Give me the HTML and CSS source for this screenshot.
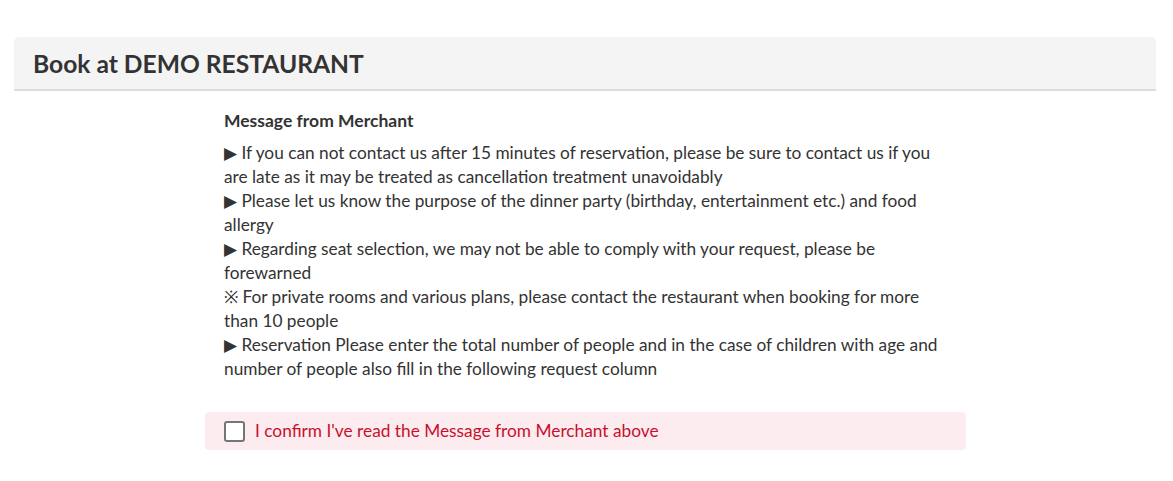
FILE: index.html
```html
<!DOCTYPE html>
<html>
<head>
<meta charset="utf-8">
<link rel="stylesheet" href="styles.css">
</head>
<body>
<div class="page">
  <div class="header"><h1>Book at DEMO RESTAURANT</h1></div>
  <div class="content">
    <div class="message">
      <h2>Message from Merchant</h2>
      <p>▶ If you can not contact us after 15 minutes of reservation, please be sure to contact us if you are late as it may be treated as cancellation treatment unavoidably<br>▶ Please let us know the purpose of the dinner party (birthday, entertainment etc.) and food allergy<br>▶ Regarding seat selection, we may not be able to comply with your request, please be forewarned<br>※ For private rooms and various plans, please contact the restaurant when booking for more than 10 people<br>▶ Reservation Please enter the total number of people and in the case of children with age and number of people also fill in the following request column</p>
    </div>
    <label class="confirm">
      <span class="box"></span>
      <span class="label-text">I confirm I've read the Message from Merchant above</span>
    </label>
  </div>
</div>
</body>
</html>
```
FILE: styles.css
```css
html, body {
  margin: 0;
  padding: 0;
  background: #fff;
}
body {
  font-family: Lato, "Liberation Sans", sans-serif;
  color: #333;
}
.page {
  padding: 37px 17px 0 14px;
}
.header {
  background: #f4f4f4;
  border-bottom: 2px solid #dcdcdc;
  border-radius: 5px 5px 0 0;
  height: 52px;
  display: flex;
  align-items: center;
  padding-left: 19px;
}
.header h1 {
  margin: 0;
  font-size: 24.6px;
  font-weight: 700;
  color: #333;
  line-height: 1;
  padding-top: 2px;
}
.content {
  width: 761px;
  margin-left: 191px;
  padding-top: 18px;
}
.message {
  padding: 0 19px;
}
.message h2 {
  margin: 0 0 8px;
  font-size: 17.5px;
  font-weight: 700;
  line-height: 24px;
  color: #333;
}
.message p {
  margin: 0;
  font-size: 17.25px;
  line-height: 24px;
  color: #333;
}
.confirm {
  display: flex;
  align-items: center;
  margin-top: 31px;
  height: 38px;
  background: #fdecef;
  border-radius: 4px;
  padding: 0 19px;
  gap: 10px;
}
.box {
  width: 17px;
  height: 17px;
  border: 2px solid #767676;
  border-radius: 3px;
  background: #fff;
  flex: none;
}
.label-text {
  font-size: 17.3px;
  color: #c8102e;
  line-height: 24px;
}
```
